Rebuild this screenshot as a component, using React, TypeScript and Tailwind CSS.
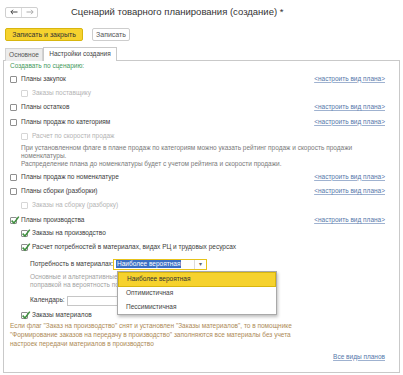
import React from "react";

const linkText = "<настроить вид плана>";

function Box({ checked, disabled }: { checked?: boolean; disabled?: boolean }) {
  return (
    <span
      className={
        disabled
          ? "relative inline-block w-[7px] h-[7px] shrink-0 border border-[#d6d6d6] rounded-[1px] bg-white"
          : "relative inline-block w-[7px] h-[7px] shrink-0 border border-[#8f8f8f] rounded-[1px] bg-white"
      }
    >
      {checked && (
        <svg className="absolute left-[-1px] top-[-3px] w-[10px] h-[10px]" viewBox="0 0 10 10">
          <path d="M1.6 5.6 L4 8 L8.8 1.6" stroke="#3f8f3f" strokeWidth="1.5" fill="none" />
        </svg>
      )}
    </span>
  );
}

function Row({
  h,
  label,
  checked,
  disabled,
  sub,
  link,
}: {
  h: string;
  label: string;
  checked?: boolean;
  disabled?: boolean;
  sub?: boolean;
  link?: boolean;
}) {
  return (
    <div className={`flex items-center ${h}`}>
      <div className={sub ? "flex items-center gap-[4px] pl-[11px]" : "flex items-center gap-[4px]"}>
        <Box checked={checked} disabled={disabled} />
        <span className={disabled ? "text-[#b4b4b4]" : "text-[#3b3b3b]"}>{label}</span>
      </div>
      {link && <span className="ml-auto text-[#5577aa] underline decoration-[#9fb2d0]">{linkText}</span>}
    </div>
  );
}

export default function App() {
  return (
    <div className="w-[403px] h-[375px] bg-white overflow-hidden font-['Liberation_Sans',Arial,sans-serif] text-[6.5px] leading-none text-[#3b3b3b] whitespace-nowrap">
      {/* header */}
      <div className="flex items-center h-[24px] px-[5px]">
        <div className="flex w-[33px] h-[11px] border border-[#cfcfcf] rounded-[2px] bg-white">
          <div className="flex-1 flex items-center justify-center border-r border-[#dcdcdc]">
            <svg width="8" height="6" viewBox="0 0 8 6">
              <path d="M7.5 3 H1 M3 0.8 L0.8 3 L3 5.2" stroke="#444" strokeWidth="1" fill="none" />
            </svg>
          </div>
          <div className="flex-1 flex items-center justify-center">
            <svg width="8" height="6" viewBox="0 0 8 6">
              <path d="M0.5 3 H7 M5 0.8 L7.2 3 L5 5.2" stroke="#aaa" strokeWidth="1" fill="none" />
            </svg>
          </div>
        </div>
        <div className="ml-[33px] text-[9.5px] text-[#333]">Сценарий товарного планирования (создание) *</div>
      </div>

      {/* command bar */}
      <div className="flex mt-[4px] pl-[5px] gap-[9px]">
        <div className="h-[13px] w-[78px] flex items-center justify-center bg-[#f6d22e] border border-[#d8b60e] rounded-[2px] text-[#333] text-[7px]">
          Записать и закрыть
        </div>
        <div className="h-[13px] w-[38px] flex items-center justify-center bg-white border border-[#cdcdcd] rounded-[2px] text-[#555] text-[7px]">
          Записать
        </div>
      </div>

      {/* tabs */}
      <div className="flex mt-[6px] pl-[5px] h-[14px] relative z-10 mb-[-1px]">
        <div className="w-[38px] h-[13px] mt-[1px] flex items-center justify-center bg-[#ececec] border border-[#d2d2d2] border-b-0 text-[#555]">
          Основное
        </div>
        <div className="w-[74px] h-[14px] flex items-center justify-center bg-white border border-[#c9c9c9] border-b-0 text-[#444]">
          Настройки создания
        </div>
      </div>

      {/* panel */}
      <div className="relative mx-[3px] h-[313px] border border-[#c9c9c9] pl-[6px] pr-[14px]">
        <div className="h-[11px] flex items-center text-[#459a5c]">Создавать по сценарию:</div>
        <Row h="h-[14px]" label="Планы закупок" link />
        <Row h="h-[14px]" label="Заказы поставщику" sub disabled />
        <Row h="h-[15px]" label="Планы остатков" link />
        <Row h="h-[14px]" label="Планы продаж по категориям" link />
        <Row h="h-[15px]" label="Расчет по скорости продаж" sub disabled />
        <div className="pl-[11px] leading-[8px] text-[#7a7a7a]">
          <div>При установленном флаге в плане продаж по категориям можно указать рейтинг продаж и скорость продажи</div>
          <div>номенклатуры.</div>
          <div>Распределение плана до номенклатуры будет с учетом рейтинга и скорости продажи.</div>
        </div>
        <div className="mt-[2px]" />
        <Row h="h-[14px]" label="Планы продаж по номенклатуре" link />
        <Row h="h-[15px]" label="Планы сборки (разборки)" link />
        <Row h="h-[12px]" label="Заказы на сборку (разборку)" sub disabled />
        <div className="mt-[3px]" />
        <Row h="h-[13px]" label="Планы производства" checked link />
        <Row h="h-[13px]" label="Заказы на производство" checked sub />
        <Row h="h-[14px]" label="Расчет потребностей в материалах, видах РЦ и трудовых ресурсах" checked sub />

        <div className="mt-[4px] h-[12px] flex items-center pl-[20px]">
          <span className="w-[83px] shrink-0">Потребность в материалах:</span>
          <div className="flex h-[11px] w-[94px] border border-[#e6c21a] bg-white">
            <div className="flex-1 flex items-center pl-[2px]">
              <span className="bg-[#3b6fc4] text-white px-[1px] h-[8px] flex items-center">Наиболее вероятная</span>
            </div>
            <div className="w-[12px] flex items-center justify-center border-l border-[#dcdcdc] text-[6px] text-[#666]">▾</div>
          </div>
        </div>
        <div className="mt-[3px] pl-[20px] leading-[8px] text-[#a3a3a3]">
          <div>Основные и альтернативные виды РЦ и трудовых ресурсов рассчитываются с</div>
          <div>поправкой на вероятность по данным спецификаций</div>
        </div>
        <div className="mt-[6px] h-[11px] flex items-center pl-[20px]">
          <span className="w-[37px] shrink-0">Календарь:</span>
          <div className="h-[10px] w-[163px] border border-[#c6c6c6] bg-white" />
        </div>
        <div className="mt-[3px]" />
        <Row h="h-[12px]" label="Заказы материалов" checked sub />
        <div className="leading-[9px] text-[#ad8a56]">
          <div>Если флаг "Заказ на производство" снят и установлен "Заказы материалов", то в помощнике</div>
          <div>"Формирование заказов на передачу в производство" заполняются все материалы без учета</div>
          <div>настроек передачи материалов в производство</div>
        </div>
        <div className="mt-[3px] h-[12px] flex items-center justify-end">
          <span className="text-[#5577aa] underline decoration-[#9fb2d0]">Все виды планов</span>
        </div>

        {/* dropdown list */}
        <div className="absolute left-[113px] top-[210px] w-[160px] h-[44px] bg-white border border-[#a9a9a9] shadow-[1px_2px_3px_rgba(0,0,0,0.25)] flex flex-col">
          <div className="h-[15px] flex items-center pl-[8px] bg-[#f6d22e] border border-[#d8b60e] text-[#333]">
            Наиболее вероятная
          </div>
          <div className="h-[14px] flex items-center pl-[8px] text-[#444]">Оптимистичная</div>
          <div className="h-[14px] flex items-center pl-[8px] text-[#444]">Пессимистичная</div>
        </div>
      </div>
    </div>
  );
}
